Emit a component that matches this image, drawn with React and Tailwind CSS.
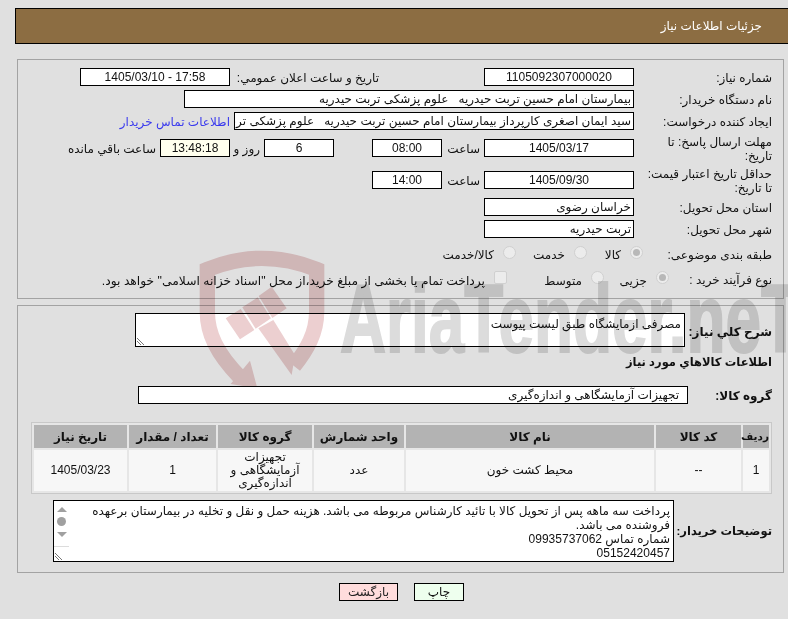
import React from "react";

const Field = ({ className = "", children }) => (
  <div className={`h-[18px] shrink-0 overflow-hidden whitespace-pre border border-black bg-white text-center leading-[16px] ${className}`}>
    {children}
  </div>
);

const Label = ({ className = "w-[138px]", children }) => (
  <div className={`shrink-0 pt-[2px] text-right ${className}`}>{children}</div>
);

const Radio = ({ checked }) => (
  <span className="mb-[3px] flex h-[13px] w-[13px] shrink-0 items-center justify-center rounded-full border border-[#d0d0d0] bg-[#ececec]">
    {checked && <span className="h-[7px] w-[7px] rounded-full bg-[#b8b8b8]" />}
  </span>
);

const Watermark = () => (
  <svg
    className="pointer-events-none absolute left-[190px] top-[240px] mix-blend-multiply"
    dir="ltr"
    width="598"
    height="146"
    viewBox="0 0 598 146"
  >
    <g transform="scale(0.3333)">
      <path d="M150 412 C80 340 52 280 52 215 L52 88 Q215 22 380 88 L380 215 C380 280 350 330 312 378" fill="none" stroke="#eccfd0" strokeWidth="46" />
      <polygon points="205,265 250,240 315,345 305,405" fill="#eccfd0" />
      <polygon points="107,235 152,207 193,270 150,298" fill="#eccfd0" />
      <polygon points="157,202 203,172 243,235 197,266" fill="#eccfd0" />
      <polygon points="206,168 245,140 290,205 247,234" fill="#eccfd0" />
      <polygon points="180,362 202,445 122,432" fill="#eccfd0" />
    </g>
    <text
      x="150"
      y="112"
      direction="ltr"
      fontFamily="Liberation Sans"
      fontWeight="700"
      fontSize="96"
      textLength="460"
      lengthAdjust="spacingAndGlyphs"
      fill="#dcdcdc"
      stroke="#dcdcdc"
      strokeWidth="2"
    >
      AriaTender.neT
    </text>
  </svg>
);

export default function App() {
  return (
    <div className="relative h-[619px] w-[788px] overflow-hidden bg-[#e0e0e0] pt-[8px] text-[12px] text-[#111] [font-family:'Liberation_Sans','DejaVu_Sans',sans-serif]" dir="rtl">
      {/* header */}
      <div className="mr-0 ml-[15px] flex h-[36px] items-center border-y border-l border-black bg-[#8c6d42] pr-[26px] text-white">
        جزئیات اطلاعات نیاز
      </div>

      {/* main info */}
      <div className="mr-[4px] ml-[17px] mt-[15px] h-[240px] border border-[#a3a3a3] pr-[11px] pt-[8px]">
        <div className="flex h-[18px] items-center">
          <Label>شماره نیاز:</Label>
          <Field className="w-[150px]">1105092307000020</Field>
          <Label className="mr-[105px] w-[149px]">تاریخ و ساعت اعلان عمومي:</Label>
          <Field className="w-[150px]">17:58 - 1405/03/10</Field>
        </div>
        <div className="mt-[4px] flex h-[18px] items-center">
          <Label>نام دستگاه خریدار:</Label>
          <Field className="w-[450px] pr-[2px] text-right">بیمارستان امام حسین تربت حیدریه   علوم پزشکی تربت حیدریه</Field>
        </div>
        <div className="mt-[4px] flex h-[18px] items-center">
          <Label>ایجاد کننده درخواست:</Label>
          <Field className="w-[400px] pr-[2px] text-right">سید ایمان اصغری کارپرداز بیمارستان امام حسین تربت حیدریه   علوم پزشکی تربت حیدریه</Field>
          <a className="mr-[4px] pt-[1px] text-[#3a3aee]">اطلاعات تماس خریدار</a>
        </div>
        <div className="mt-[9px] flex h-[18px] items-center">
          <Label className="w-[138px] pl-[8px] leading-[14px]">مهلت ارسال پاسخ: تا تاریخ:</Label>
          <Field className="w-[150px]">1405/03/17</Field>
          <span className="mr-[4px] w-[38px] pt-[2px]">ساعت</span>
          <Field className="w-[70px]">08:00</Field>
          <Field className="mr-[38px] w-[70px]">6</Field>
          <span className="mr-[4px] w-[30px] pt-[2px]">روز و</span>
          <Field className="w-[70px] !bg-[#ffffee]">13:48:18</Field>
          <span className="mr-[4px] pt-[2px]">ساعت باقي مانده</span>
        </div>
        <div className="mt-[14px] flex h-[18px] items-center">
          <Label className="w-[138px] pl-[12px] leading-[14px]">حداقل تاریخ اعتبار قیمت: تا تاریخ:</Label>
          <Field className="w-[150px]">1405/09/30</Field>
          <span className="mr-[4px] w-[38px] pt-[2px]">ساعت</span>
          <Field className="w-[70px]">14:00</Field>
        </div>
        <div className="mt-[9px] flex h-[18px] items-center">
          <Label>استان محل تحویل:</Label>
          <Field className="w-[150px] pr-[2px] text-right">خراسان رضوی</Field>
        </div>
        <div className="mt-[4px] flex h-[18px] items-center">
          <Label>شهر محل تحویل:</Label>
          <Field className="w-[150px] pr-[2px] text-right">تربت حیدریه</Field>
        </div>
        <div className="mt-[7px] flex h-[18px] items-center">
          <Label className="w-[129px]">طبقه بندی موضوعی:</Label>
          <div className="flex w-[56px] items-center gap-[9px]"><Radio checked /><span className="mt-[2px]">کالا</span></div>
          <div className="flex w-[71px] items-center gap-[9px]"><Radio /><span className="mt-[2px]">خدمت</span></div>
          <div className="flex items-center gap-[9px]"><Radio /><span className="mt-[2px]">کالا/خدمت</span></div>
        </div>
        <div className="mt-[7px] flex h-[18px] items-center">
          <Label className="w-[103px]">نوع فرآیند خرید :</Label>
          <div className="flex w-[65px] items-center gap-[9px]"><Radio checked /><span className="mt-[4px]">جزیی</span></div>
          <div className="flex w-[97px] items-center gap-[9px]"><Radio /><span className="mt-[4px]">متوسط</span></div>
          <div className="flex items-center gap-[9px]">
            <span className="mb-[3px] h-[13px] w-[13px] shrink-0 rounded-[2px] border border-[#d0d0d0] bg-[#ececec]" />
            <span className="mt-[4px] whitespace-nowrap text-[12.3px]">پرداخت تمام یا بخشی از مبلغ خرید،از محل "اسناد خزانه اسلامی" خواهد بود.</span>
          </div>
        </div>
      </div>

      {/* details */}
      <div className="mr-[4px] ml-[17px] mt-[6px] h-[268px] border border-[#a3a3a3] pr-[11px] pt-[7px]">
        <div className="flex h-[34px] items-center">
          <Label className="w-[87px] pt-[4px] font-bold">شرح کلي نياز:</Label>
          <div className="relative h-[34px] w-[550px] shrink-0 border border-black bg-white pr-[3px] pt-[2px] leading-[16px]">
            مصرفی ازمایشگاه طبق لیست پیوست
            <ResizeGrip />
          </div>
        </div>
        <div className="mt-[7px] text-[11.5px] font-bold leading-[16px]">اطلاعات کالاهاي مورد نياز</div>
        <div className="mt-[16px] flex h-[18px] items-center">
          <Label className="w-[84px] font-bold">گروه کالا:</Label>
          <Field className="w-[550px] pr-[8px] text-right">تجهیزات آزمایشگاهی و اندازه‌گیری</Field>
        </div>

        {/* goods table */}
        <table className="ml-[12px] mt-[18px] w-[741px] table-fixed border-separate border-spacing-[2px] border border-[#c8c8c8] bg-[#e6e6e6] text-center">
          <thead>
            <tr className="h-[23px] bg-[#b3b3b3] font-bold">
              <th className="w-[26px] p-0 text-[10.5px]">ردیف</th>
              <th className="w-[85px] p-0">کد کالا</th>
              <th className="w-[248px] p-0">نام کالا</th>
              <th className="w-[90px] p-0">واحد شمارش</th>
              <th className="w-[94px] p-0">گروه کالا</th>
              <th className="w-[87px] p-0">تعداد / مقدار</th>
              <th className="w-[93px] p-0">تاریخ نیاز</th>
            </tr>
          </thead>
          <tbody>
            <tr className="h-[41px] bg-[#f7f7f7] leading-[13px]">
              <td className="p-0">1</td>
              <td className="p-0">--</td>
              <td className="p-0">محیط کشت خون</td>
              <td className="p-0">عدد</td>
              <td className="p-0">تجهیزات آزمایشگاهی و اندازه‌گیری</td>
              <td className="p-0">1</td>
              <td className="p-0">1405/03/23</td>
            </tr>
          </tbody>
        </table>

        <div className="mt-[6px] flex h-[62px] items-center">
          <Label className="w-[98px] whitespace-nowrap text-[11.5px] font-bold">توضیحات خریدار:</Label>
          <div className="relative flex h-[62px] w-[621px] shrink-0 border border-black bg-white">
            <div className="flex-1 pr-[3px] pt-[3px] leading-[14px]">
              پرداخت سه ماهه پس از تحویل کالا با تائید کارشناس مربوطه می باشد. هزینه حمل و نقل و تخلیه در بیمارستان برعهده فروشنده می باشد.
              <br />
              شماره تماس 09935737062
              <br />
              05152420457
            </div>
            <div className="flex w-[15px] shrink-0 flex-col items-center pt-[6px]">
              <span className="h-0 w-0 border-x-[5px] border-b-[5px] border-x-transparent border-b-[#a0a0a0]" />
              <span className="mt-[5px] h-[9px] w-[9px] rounded-full bg-[#a0a0a0]" />
              <span className="mt-[6px] h-0 w-0 border-x-[5px] border-t-[5px] border-x-transparent border-t-[#a0a0a0]" />
              <span className="mt-[9px] h-px w-full bg-[#dcdcdc]" />
            </div>
            <ResizeGrip />
          </div>
        </div>
      </div>

      {/* buttons */}
      <div className="mt-[10px] flex justify-start gap-[16px] pl-[339px]" dir="ltr">
        <button className="h-[18px] w-[59px] border border-black bg-[#ffdcdc] leading-[16px] text-[#222]">بازگشت</button>
        <button className="h-[18px] w-[50px] border border-black bg-[#eeffee] leading-[16px]">چاپ</button>
      </div>

      <Watermark />
    </div>
  );
}

function ResizeGrip() {
  return (
    <svg className="absolute bottom-0 left-0" width="9" height="9" viewBox="0 0 9 9">
      <path d="M1 1 L8 8 M1 4 L5 8" stroke="#777" strokeWidth="1" fill="none" />
    </svg>
  );
}
